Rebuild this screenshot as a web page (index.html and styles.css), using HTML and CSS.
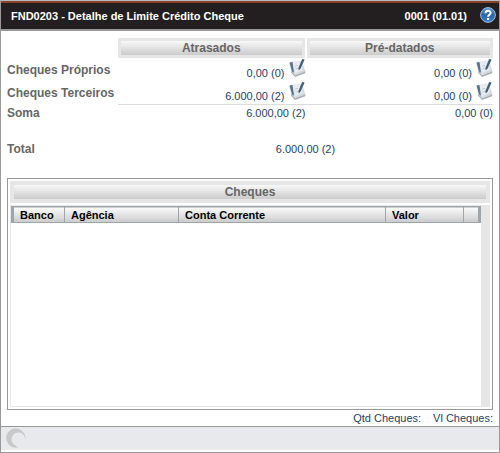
FILE: index.html
```html
<!DOCTYPE html>
<html lang="pt-BR">
<head>
  <meta charset="UTF-8">
  <meta name="viewport" content="width=device-width, initial-scale=1.0">
  <title>FND0203 - Detalhe de Limite Crédito Cheque</title>
  <link rel="stylesheet" href="styles.css">
</head>
<body>
  <svg width="0" height="0" class="sprite" aria-hidden="true">
    <defs>
      <linearGradient id="paper" x1="0" y1="0" x2="1" y2="1">
        <stop offset="0" stop-color="#f4f5f7"/>
        <stop offset="1" stop-color="#c9ced5"/>
      </linearGradient>
    </defs>
    <symbol id="detalhe" viewBox="0 0 18 20">
      <path d="M0.5 5 L4 3 L14 2.5 L17.5 14 L7 18 L3.5 14 Z" fill="url(#paper)"/>
      <path d="M7 17.4 L17.5 13.4 L17 15.2 L7 19 L3 14.6 L3.5 13 Z" fill="#a4acb5"/>
      <path d="M1.5 4.6 L4.5 4 L6 14.8 L4 13.5 Z" fill="#557389"/>
      <path d="M5.5 5 L12.5 4 L14.5 12 L7.5 15 Z" fill="#e9edf2"/>
      <path d="M7 8.2 L10 7.4 M7.5 11 L10.5 10.2" stroke="#c3cad3" stroke-width="1"/>
      <path d="M14.2 1 L16.6 1.6 L12.6 10.5 L10.8 12.4 L10.4 10 Z" fill="#3f5f78"/>
    </symbol>
  </svg>

  <div class="window">
    <header class="titlebar">
      <h1>FND0203 - Detalhe de Limite Crédito Cheque</h1>
      <span class="version">0001 (01.01)</span>
      <button type="button" class="help" aria-label="Ajuda">
        <svg width="16" height="16" viewBox="0 0 16 16">
          <defs>
            <linearGradient id="ball" x1="0" y1="0" x2="0" y2="1">
              <stop offset="0" stop-color="#5b95d2"/>
              <stop offset="0.5" stop-color="#2765ad"/>
              <stop offset="1" stop-color="#3a80c9"/>
            </linearGradient>
          </defs>
          <circle cx="8" cy="8" r="7.4" fill="url(#ball)" stroke="#a3bddb" stroke-width="1"/>
          <path d="M5.5 6.2 C5.5 3 10.6 3 10.6 6 C10.6 7.8 8.1 7.8 8.1 9.8" fill="none" stroke="#fff" stroke-width="2"/>
          <rect x="7" y="11" width="2.2" height="2" fill="#fff"/>
        </svg>
      </button>
    </header>

    <main>
      <table class="resumo">
        <colgroup>
          <col class="col-label">
          <col>
          <col>
        </colgroup>
        <thead>
          <tr>
            <td></td>
            <th scope="col"><div class="faixa">Atrasados</div></th>
            <th scope="col"><div class="faixa">Pré-datados</div></th>
          </tr>
        </thead>
        <tbody>
          <tr class="linha">
            <th scope="row">Cheques Próprios</th>
            <td><div class="valor"><span>0,00 (0)</span><button type="button" aria-label="Detalhar"><svg width="18" height="20"><use href="#detalhe"/></svg></button></div></td>
            <td><div class="valor"><span>0,00 (0)</span><button type="button" aria-label="Detalhar"><svg width="18" height="20"><use href="#detalhe"/></svg></button></div></td>
          </tr>
          <tr class="linha ultima">
            <th scope="row">Cheques Terceiros</th>
            <td><div class="valor"><span>6.000,00 (2)</span><button type="button" aria-label="Detalhar"><svg width="18" height="20"><use href="#detalhe"/></svg></button></div></td>
            <td><div class="valor"><span>0,00 (0)</span><button type="button" aria-label="Detalhar"><svg width="18" height="20"><use href="#detalhe"/></svg></button></div></td>
          </tr>
          <tr class="soma">
            <th scope="row">Soma</th>
            <td>6.000,00 (2)</td>
            <td>0,00 (0)</td>
          </tr>
          <tr class="total">
            <th scope="row">Total</th>
            <td colspan="2">6.000,00 (2)</td>
          </tr>
        </tbody>
      </table>

      <section class="painel">
        <h2><span class="faixa">Cheques</span></h2>
        <div class="lista">
          <table class="cheques">
            <colgroup>
              <col class="col-banco">
              <col class="col-agencia">
              <col class="col-conta">
              <col class="col-valor">
              <col>
            </colgroup>
            <thead>
              <tr>
                <th scope="col">Banco</th>
                <th scope="col">Agência</th>
                <th scope="col">Conta Corrente</th>
                <th scope="col">Valor</th>
                <td></td>
              </tr>
            </thead>
          </table>
        </div>
      </section>

      <div class="totais">
        <span>Qtd Cheques:</span>
        <span>Vl Cheques:</span>
      </div>
    </main>

    <footer class="status">
      <svg width="20" height="20" viewBox="0 0 20 20" aria-hidden="true">
        <path d="M12.5 19.3 A9.6 9.6 0 1 1 19.4 9.5 L19 12.5 A6.8 6.8 0 1 0 9 17.2 Q10 18.6 12.5 19.3 Z" fill="#c8c8c9"/>
      </svg>
    </footer>
  </div>
</body>
</html>
```
FILE: styles.css
```css
*, *::before, *::after { box-sizing: border-box; }

html, body {
  margin: 0;
  height: 100%;
}

body {
  font-family: "Liberation Sans", Arial, sans-serif;
  font-size: 11px;
  color: #1f3f66;
  background: #fff;
}

.sprite { position: absolute; }

button {
  padding: 0;
  border: none;
  background: none;
  cursor: pointer;
}

svg { display: block; }

table {
  width: 100%;
  border-collapse: collapse;
  table-layout: fixed;
}

th, td { padding: 0; }

.window {
  display: flex;
  flex-direction: column;
  min-height: 100vh;
  border: 1px solid #999;
  border-top-color: #b4bcc4;
}

/* title bar */
.titlebar {
  display: flex;
  align-items: center;
  height: 30px;
  padding: 0 3px 0 10px;
  color: #fff;
  font-weight: bold;
  background: #231f20;
  border-top: 2px solid #8a4329;
  border-bottom: 2px solid #999;
}

.titlebar h1 {
  flex: 1;
  margin: 0;
  font-size: 11px;
}

.help {
  margin: 0 0 2px 13px;
}

main {
  flex: 1;
  display: flex;
  flex-direction: column;
  padding: 7px 6px 0;
}

.faixa {
  display: block;
  height: 14px;
  line-height: 14px;
  font-size: 12px;
  font-weight: bold;
  text-align: center;
  color: #666;
  background: linear-gradient(#f8f8f8, #cbcbcb);
}

/* summary */
.col-label { width: 111px; }

.resumo thead th {
  padding: 3px;
  background: #e6e6e6;
}

.resumo thead th + th { border-left: 2px solid #fff; }

.resumo tbody th {
  font-size: 12px;
  text-align: left;
  color: #666;
}

.resumo td { text-align: right; }

.linha { height: 23px; }

.linha td { vertical-align: top; }

.valor {
  display: flex;
  justify-content: flex-end;
  align-items: flex-start;
  gap: 3px;
  line-height: 14px;
}

.valor span { padding-top: 8px; }

.ultima td { border-bottom: 1px solid #ddd; }

.soma { height: 18px; }

.total { height: 54px; }

.total td { text-align: center; }

/* cheques */
.painel {
  flex: 1;
  display: flex;
  flex-direction: column;
  margin-top: 2px;
  padding: 2px;
  border: 1px solid #999;
}

.painel h2 {
  margin: 0 0 2px;
  padding: 4px;
  background: #e6e6e6;
}

.lista {
  flex: 1;
  border: 1px solid #e6e6e6;
  border-right-width: 9px;
}

.cheques thead tr {
  height: 16px;
  background: linear-gradient(#fafafa, #cccccc);
  border: 1px solid #9da5ad;
  border-width: 1px 3px;
}

.cheques th {
  padding-left: 6px;
  text-align: left;
  color: #000;
  border-right: 1px solid #9da5ad;
}

.col-banco { width: 52px; }
.col-agencia { width: 114px; }
.col-conta { width: 207px; }
.col-valor { width: 78px; }

.totais {
  display: flex;
  justify-content: flex-end;
  gap: 12px;
  line-height: 16px;
}

/* status bar */
.status {
  height: 26px;
  padding: 1px 5px;
  background: #e8e9ed;
  border-top: 1px solid #999;
  border-bottom: 2px solid #fff;
}
```
